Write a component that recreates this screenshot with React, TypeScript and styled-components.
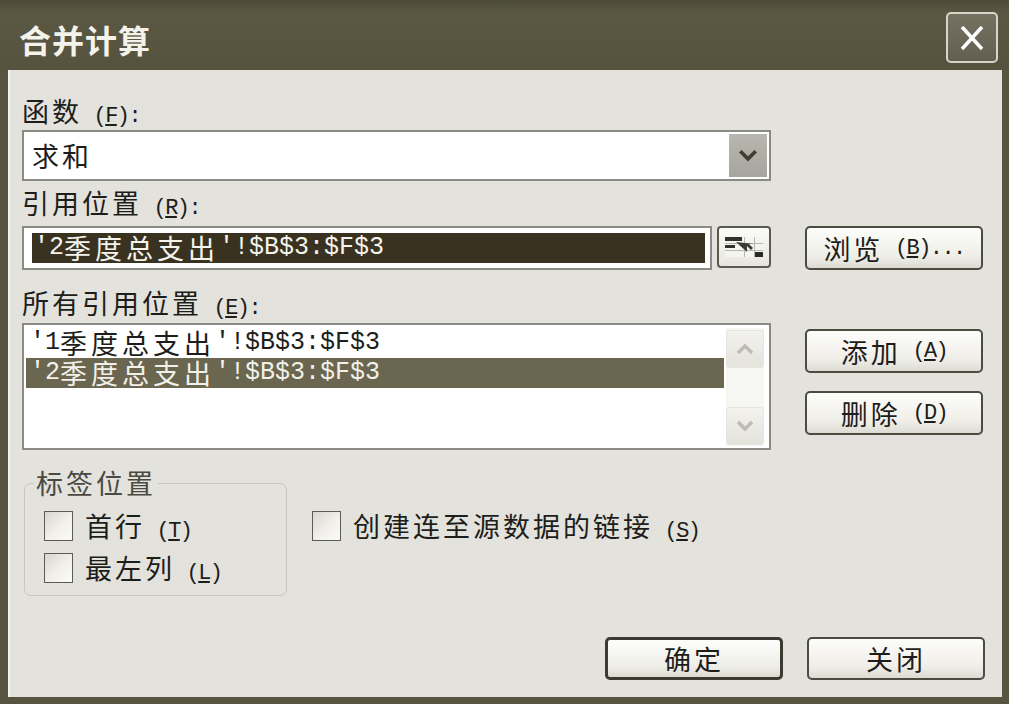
import React from "react";
import styled, { createGlobalStyle } from "styled-components";

const GlobalStyle = createGlobalStyle`
  html, body {
    margin: 0;
    padding: 0;
    background: #57543f;
  }
  body {
    width: 1009px;
    height: 704px;
    overflow: hidden;
  }
`;

const cjk = `"Noto Sans CJK SC", "Noto Sans CJK JP", sans-serif`;
const mono = `"Liberation Mono", "Noto Sans CJK SC", monospace`;

const Window = styled.div`
  display: flex;
  flex-direction: column;
  width: 1009px;
  height: 704px;
  background: #57543f;
`;

const TitleBar = styled.div`
  height: 70px;
  flex-shrink: 0;
  display: flex;
  align-items: flex-start;
  justify-content: space-between;
  padding: 0 11px 0 19px;
  box-sizing: border-box;
  background: linear-gradient(#4c4a39, #5a5743 18%, #57543f 70%, #55523e);
`;

const Title = styled.div`
  margin-top: 18px;
  color: #f3f3ec;
  font-family: ${cjk};
  font-weight: 700;
  font-size: 32px;
  line-height: 42px;
  letter-spacing: 1px;
`;

const CloseButton = styled.div`
  margin-top: 12px;
  width: 52px;
  height: 51px;
  box-sizing: border-box;
  border: 2px solid #d6d5c9;
  border-radius: 5px;
  background: linear-gradient(#757262, #625f4f);
  display: flex;
  align-items: center;
  justify-content: center;
`;

const Body = styled.div`
  flex: 1;
  display: flex;
  flex-direction: column;
  margin: 0 7px 7px 8px;
  padding: 23px 19px 0 14px;
  background: #e3e2dc;
  box-shadow: inset 2px 0 0 #f3f3ef;
`;

const Label = styled.div<{ $top: number; $bottom: number }>`
  margin: ${(p) => p.$top}px 0 ${(p) => p.$bottom}px;
  height: 36px;
  line-height: 36px;
  font-family: ${cjk};
  font-size: 27px;
  letter-spacing: 3px;
  color: #1d1d1a;
  white-space: nowrap;
`;

const Hotkey = styled.span`
  font-family: ${mono};
  font-size: 22px;
  letter-spacing: -1.6px;
  white-space: pre;
`;

const FieldRow = styled.div`
  display: flex;
  align-items: flex-start;
  gap: 34px;
`;

const Combo = styled.div`
  width: 749px;
  height: 51px;
  box-sizing: border-box;
  border: 2px solid #8c8b83;
  background: #fff;
  display: flex;
  align-items: center;
  justify-content: space-between;
  padding: 0 2px 0 8px;
`;

const ComboText = styled.span`
  font-family: ${cjk};
  font-size: 27px;
  letter-spacing: 3px;
  color: #1d1d1a;
`;

const DropButton = styled.div`
  width: 38px;
  height: 43px;
  background: linear-gradient(#b8b7af, #a7a69e);
  display: flex;
  align-items: center;
  justify-content: center;
`;

const RefField = styled.div`
  display: flex;
  gap: 5px;
  width: 749px;
`;

const RefInput = styled.div`
  width: 690px;
  height: 44px;
  box-sizing: border-box;
  border: 2px solid #8c8b83;
  background: #fff;
  padding: 5px 5px 5px 8px;
  display: flex;
`;

const Selection = styled.div`
  flex: 1;
  height: 30px;
  display: flex;
  align-items: center;
  padding-left: 2px;
  background: #3a3220;
  color: #f4f4ee;
  white-space: nowrap;
`;

const PickerButton = styled.div`
  width: 54px;
  height: 42px;
  box-sizing: border-box;
  border: 2px solid #5b5a4e;
  border-radius: 4px;
  background: linear-gradient(#fbfbf8, #e6e5de);
  display: flex;
  align-items: center;
  justify-content: center;
`;

const SideButton = styled.div<{ $default?: boolean }>`
  width: 178px;
  height: 44px;
  box-sizing: border-box;
  border: ${(p) => (p.$default ? "3px solid #3c3b31" : "2px solid #4c4b3f")};
  border-radius: 5px;
  background: linear-gradient(#fdfdfb, #efeee8 70%, #dcdbd3);
  display: flex;
  align-items: center;
  justify-content: center;
  font-family: ${cjk};
  font-size: 27px;
  letter-spacing: 3px;
  color: #1d1d1a;
  white-space: nowrap;
`;

const SideStack = styled.div`
  display: flex;
  flex-direction: column;
  gap: 18px;
  margin-top: 6px;
`;

const ListBox = styled.div`
  width: 749px;
  height: 127px;
  box-sizing: border-box;
  border: 2px solid #8c8b83;
  background: #fff;
  display: flex;
  gap: 2px;
  padding: 3px 5px 2px 2px;
`;

const Items = styled.div`
  flex: 1;
  display: flex;
  flex-direction: column;
`;

const Item = styled.div<{ $selected?: boolean }>`
  height: 30px;
  display: flex;
  align-items: center;
  padding-left: 4px;
  white-space: nowrap;
  background: ${(p) => (p.$selected ? "#6b6650" : "transparent")};
  color: ${(p) => (p.$selected ? "#f1f1ea" : "#1d1d1a")};
`;

const ScrollBar = styled.div`
  width: 38px;
  display: flex;
  flex-direction: column;
  justify-content: space-between;
  padding: 2px 0 1px;
  background: #f6f6f2;
`;

const ScrollButton = styled.div`
  height: 38px;
  box-sizing: border-box;
  border: 1px solid #e6e5df;
  border-radius: 3px;
  background: linear-gradient(#f3f2ee, #e3e2db);
  display: flex;
  align-items: center;
  justify-content: center;
`;

const Mono = styled.span`
  font-family: ${mono};
  font-size: 25px;
  line-height: 28px;
  white-space: pre;
`;

const Wide = styled.span`
  font-family: ${cjk};
  font-size: 27px;
  line-height: 28px;
  letter-spacing: 4px;
`;

const Options = styled.div`
  display: flex;
  align-items: flex-start;
  margin-top: 20px;
  padding-left: 2px;
`;

const Group = styled.fieldset`
  margin: 0;
  width: 263px;
  box-sizing: border-box;
  border: 1px solid #c7c6be;
  border-radius: 7px;
  padding: 14px 0 12px 19px;
  display: flex;
  flex-direction: column;
  gap: 11px;
`;

const Legend = styled.legend`
  margin-left: -10px;
  padding: 0 2px;
  line-height: 26px;
  font-family: ${cjk};
  font-size: 27px;
  letter-spacing: 3px;
  color: #4a4a43;
`;

const CheckRow = styled.div<{ $offset?: number }>`
  display: flex;
  align-items: center;
  gap: 12px;
  height: 31px;
  margin: ${(p) => p.$offset ?? 0}px 0 0 ${(p) => (p.$offset ? 25 : 0)}px;
  font-family: ${cjk};
  font-size: 27px;
  letter-spacing: 3px;
  color: #1d1d1a;
  white-space: nowrap;
`;

const Box = styled.div`
  width: 29px;
  height: 30px;
  box-sizing: border-box;
  border: 1px solid #5d5c51;
  background: linear-gradient(135deg, #d7d6ce, #f1f0eb 55%, #fbfbf8);
`;

const Footer = styled.div`
  display: flex;
  justify-content: flex-end;
  gap: 24px;
  margin: 41px -2px 0 0;
`;

const FooterButton = styled(SideButton)`
  height: 43px;
`;

const RefText = ({ text }: { text: string }) => (
  <>
    {text
      .split(/([\u4e00-\u9fff]+)/)
      .filter(Boolean)
      .map((part, i) =>
        /[\u4e00-\u9fff]/.test(part) ? (
          <Wide key={i}>{part}</Wide>
        ) : (
          <Mono key={i}>{part}</Mono>
        )
      )}
  </>
);

const Key = ({ k, tail = ")" }: { k: string; tail?: string }) => (
  <Hotkey>
    {" ("}
    <u>{k}</u>
    {tail}
  </Hotkey>
);

const Chevron = ({ up, color, size }: { up?: boolean; color: string; size: number }) => (
  <svg width={size} height={size * 0.6} viewBox="0 0 20 12">
    <polyline
      points={up ? "3,10 10,3 17,10" : "3,2 10,9 17,2"}
      fill="none"
      stroke={color}
      strokeWidth="3.4"
    />
  </svg>
);

const PickerIcon = () => (
  <svg width="40" height="24" viewBox="0 0 40 24">
    <rect x="1" y="2" width="38" height="20" fill="#f4f4f0" />
    <line x1="1" y1="8.5" x2="39" y2="8.5" stroke="#b9b8b0" strokeWidth="1" />
    <line x1="1" y1="15.5" x2="39" y2="15.5" stroke="#b9b8b0" strokeWidth="1" />
    <line x1="20.5" y1="2" x2="20.5" y2="22" stroke="#b9b8b0" strokeWidth="1" />
    <line x1="30.5" y1="2" x2="30.5" y2="22" stroke="#b9b8b0" strokeWidth="1" />
    <rect x="1" y="2" width="17" height="4" fill="#33322a" />
    <rect x="1" y="10" width="10" height="3" fill="#33322a" />
    <path d="M12 7 L23 17 L23 11 L27 15 L29 13 L25 9 L30 9 Z" fill="#3c3b31" />
    <rect x="31" y="17" width="8" height="5" fill="#2a2922" />
  </svg>
);

export default function App() {
  return (
    <>
      <GlobalStyle />
      <Window>
        <TitleBar>
          <Title>合并计算</Title>
          <CloseButton>
            <svg width="30" height="30" viewBox="0 0 30 30">
              <line x1="5" y1="4" x2="25" y2="26" stroke="#fff" strokeWidth="3.5" />
              <line x1="25" y1="4" x2="5" y2="26" stroke="#fff" strokeWidth="3.5" />
            </svg>
          </CloseButton>
        </TitleBar>
        <Body>
          <Label $top={0} $bottom={1}>
            函数<Key k="F" tail="):" />
          </Label>
          <Combo>
            <ComboText>求和</ComboText>
            <DropButton>
              <Chevron color="#3f3e34" size={22} />
            </DropButton>
          </Combo>

          <Label $top={4} $bottom={5}>
            引用位置<Key k="R" tail="):" />
          </Label>
          <FieldRow>
            <RefField>
              <RefInput>
                <Selection>
                  <RefText text="'2季度总支出'!$B$3:$F$3" />
                </Selection>
              </RefInput>
              <PickerButton>
                <PickerIcon />
              </PickerButton>
            </RefField>
            <SideButton>
              浏览<Key k="B" tail=")..." />
            </SideButton>
          </FieldRow>

          <Label $top={15} $bottom={2}>
            所有引用位置<Key k="E" tail="):" />
          </Label>
          <FieldRow>
            <ListBox>
              <Items>
                <Item>
                  <RefText text="'1季度总支出'!$B$3:$F$3" />
                </Item>
                <Item $selected>
                  <RefText text="'2季度总支出'!$B$3:$F$3" />
                </Item>
              </Items>
              <ScrollBar>
                <ScrollButton>
                  <Chevron up color="#bdbcb4" size={20} />
                </ScrollButton>
                <ScrollButton>
                  <Chevron color="#bdbcb4" size={20} />
                </ScrollButton>
              </ScrollBar>
            </ListBox>
            <SideStack>
              <SideButton>
                添加<Key k="A" />
              </SideButton>
              <SideButton>
                删除<Key k="D" />
              </SideButton>
            </SideStack>
          </FieldRow>

          <Options>
            <Group>
              <Legend>标签位置</Legend>
              <CheckRow>
                <Box />
                <span>
                  首行<Key k="T" />
                </span>
              </CheckRow>
              <CheckRow>
                <Box />
                <span>
                  最左列<Key k="L" />
                </span>
              </CheckRow>
            </Group>
            <CheckRow $offset={40}>
              <Box />
              <span>
                创建连至源数据的链接<Key k="S" />
              </span>
            </CheckRow>
          </Options>

          <Footer>
            <FooterButton $default>确定</FooterButton>
            <FooterButton>关闭</FooterButton>
          </Footer>
        </Body>
      </Window>
    </>
  );
}
